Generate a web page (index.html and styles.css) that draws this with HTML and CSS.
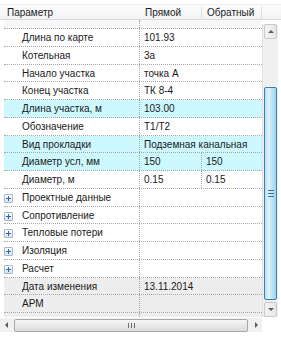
FILE: index.html
```html
<!DOCTYPE html>
<html lang="ru">
<head>
  <meta charset="UTF-8">
  <title>Свойства участка</title>
  <link rel="stylesheet" href="styles.css">
</head>
<body>
<div class="grid">
  <div class="head">
    <div class="hcell first">Параметр</div>
    <div class="hcell">Прямой</div>
    <div class="hcell">Обратный</div>
    <div class="hcell rest"></div>
  </div>
  <div class="body">
    <div class="rows">
      <div class="row part"><div class="name"></div><div class="val"></div></div>
      <div class="row"><div class="name">Длина по карте</div><div class="val">101.93</div></div>
      <div class="row"><div class="name">Котельная</div><div class="val">3а</div></div>
      <div class="row"><div class="name">Начало участка</div><div class="val">точка А</div></div>
      <div class="row"><div class="name">Конец участка</div><div class="val">ТК 8-4</div></div>
      <div class="row hl"><div class="name">Длина участка, м</div><div class="val">103.00</div></div>
      <div class="row"><div class="name">Обозначение</div><div class="val">Т1/Т2</div></div>
      <div class="row hl"><div class="name">Вид прокладки</div><div class="val">Подземная канальная</div></div>
      <div class="row hl split"><div class="name">Диаметр усл, мм</div><div class="val">150</div><div class="val">150</div></div>
      <div class="row split"><div class="name">Диаметр, м</div><div class="val">0.15</div><div class="val">0.15</div></div>
      <div class="row group"><div class="name"><span class="plus"></span>Проектные данные</div><div class="val"></div></div>
      <div class="row group"><div class="name"><span class="plus"></span>Сопротивление</div><div class="val"></div></div>
      <div class="row group"><div class="name"><span class="plus"></span>Тепловые потери</div><div class="val"></div></div>
      <div class="row group"><div class="name"><span class="plus"></span>Изоляция</div><div class="val"></div></div>
      <div class="row group"><div class="name"><span class="plus"></span>Расчет</div><div class="val"></div></div>
      <div class="row ro"><div class="name">Дата изменения</div><div class="val">13.11.2014</div></div>
      <div class="row ro"><div class="name">АРМ</div><div class="val"></div></div>
      <div class="row ro part-end"><div class="name"></div><div class="val"></div></div>
    </div>
    <div class="vscroll">
      <div class="sbtn up"><span class="arr-up"></span></div>
      <div class="vtrack"></div>
      <div class="vthumb"><span class="vgrip"></span></div>
      <div class="sbtn down"><span class="arr-down"></span></div>
    </div>
  </div>
  <div class="hscroll">
    <div class="hbtn"><span class="arr-left"></span></div>
    <div class="hthumb"><span class="hgrip"></span></div>
    <div class="hbtn"><span class="arr-right"></span></div>
  </div>
</div>
</body>
</html>
```

FILE: styles.css
```css
html, body {
  margin: 0;
  padding: 0;
  background: #fff;
}

body {
  width: 281px;
  height: 337px;
  overflow: hidden;
  font: 10px "Liberation Sans", Arial, sans-serif;
  color: #1a1a1a;
}

.grid {
  padding-top: 4px;
}

/* header */

.head {
  display: grid;
  grid-template-columns: 140px 62px 60px 1fr;
  height: 16px;
  background: linear-gradient(to bottom, #fdfdfd, #f1f2f4);
  border-top: 1px solid #eceef0;
  border-bottom: 1px solid #d8dadd;
  box-sizing: border-box;
}

.hcell {
  line-height: 14px;
  padding-left: 5px;
  border-right: 1px solid #dcdfe3;
  margin: 1px 0 2px 0;
}

.hcell.first {
  padding-left: 7px;
  border-right: 0;
}

.hcell.rest {
  border-right: 0;
}

/* rows */

.body {
  display: flex;
}

.rows {
  width: 258px;
  margin-left: 4px;
}

.row {
  display: grid;
  grid-template-columns: 136px 1fr;
  height: 17.75px;
  box-sizing: border-box;
  border-bottom: 1px dotted #a6a6a6;
  line-height: 17px;
}

.row.split {
  grid-template-columns: 136px 62px 1fr;
}

.row.part {
  height: 9px;
  background: #f7f7f7;
}

.row.part-end {
  height: 4px;
  border-bottom: 0;
}

.name {
  padding-left: 18px;
  white-space: nowrap;
  overflow: hidden;
  border-right: 1px dotted #a6a6a6;
  position: relative;
}

.val {
  padding-left: 4px;
  white-space: nowrap;
  overflow: hidden;
}

.split .val:nth-child(2) {
  border-right: 1px dotted #a6a6a6;
}

.hl {
  background: #ccf8fe;
}

.ro {
  background: #ededed;
}

.plus {
  position: absolute;
  left: 0;
  top: 5px;
  width: 7px;
  height: 7px;
  border: 1px solid #a9b8c8;
  border-radius: 1px;
  background: linear-gradient(to bottom, #ffffff, #d9e3ee);
}

.plus::before,
.plus::after {
  content: "";
  position: absolute;
  background: #2e64b0;
}

.plus::before {
  left: 1px;
  top: 3px;
  width: 5px;
  height: 1px;
}

.plus::after {
  left: 3px;
  top: 1px;
  width: 1px;
  height: 5px;
}

/* vertical scrollbar */

.vscroll {
  width: 15px;
  margin-top: 4px;
  height: 293px;
  display: flex;
  flex-direction: column;
  background: #f0f0f0;
  border-left: 1px solid #e3e3e3;
}

.sbtn {
  height: 13px;
  margin: 0 1px;
  border: 1px solid #c9c9c9;
  border-radius: 2px;
  background: linear-gradient(to right, #f4f4f4, #e6e6e6);
  display: flex;
  align-items: center;
  justify-content: center;
}

.vtrack {
  height: 48px;
}

.vthumb {
  flex: 1;
  margin: 0 1px 2px 1px;
  border: 1px solid #3c7fb1;
  border-radius: 2px;
  background: linear-gradient(to right, #b8dff7 0%, #e3f4fd 35%, #bde4f9 60%, #9fd4f3 100%);
  display: flex;
  align-items: center;
  justify-content: center;
}

.vgrip {
  width: 6px;
  height: 5px;
  border-top: 1px solid #3e6d95;
  border-bottom: 1px solid #3e6d95;
  position: relative;
}

.vgrip::after {
  content: "";
  position: absolute;
  left: 0;
  right: 0;
  top: 2px;
  height: 1px;
  background: #3e6d95;
}

.arr-up {
  border: 3px solid transparent;
  border-bottom: 3px solid #5d5d5d;
  border-top: 0;
  margin-top: -1px;
}

.arr-down {
  border: 3px solid transparent;
  border-top: 3px solid #5d5d5d;
  border-bottom: 0;
}

/* horizontal scrollbar */

.hscroll {
  display: flex;
  align-items: center;
  width: 262px;
  height: 14px;
  margin-top: 1px;
  background: #f0f0f0;
}

.hbtn {
  width: 12px;
  height: 12px;
  display: flex;
  align-items: center;
  justify-content: center;
}

.hthumb {
  flex: 1;
  height: 11px;
  margin: 0 2px;
  border: 1px solid #a8a8a8;
  border-radius: 2px;
  background: linear-gradient(to bottom, #f6f6f6, #dcdcdc);
  display: flex;
  align-items: center;
  justify-content: center;
}

.hgrip {
  width: 5px;
  height: 5px;
  border-left: 1px solid #6b6b6b;
  border-right: 1px solid #6b6b6b;
  position: relative;
}

.hgrip::after {
  content: "";
  position: absolute;
  top: 0;
  bottom: 0;
  left: 2px;
  width: 1px;
  background: #6b6b6b;
}

.arr-left {
  border: 3px solid transparent;
  border-right: 3px solid #5d5d5d;
  border-left: 0;
}

.arr-right {
  border: 3px solid transparent;
  border-left: 3px solid #5d5d5d;
  border-right: 0;
}
```
